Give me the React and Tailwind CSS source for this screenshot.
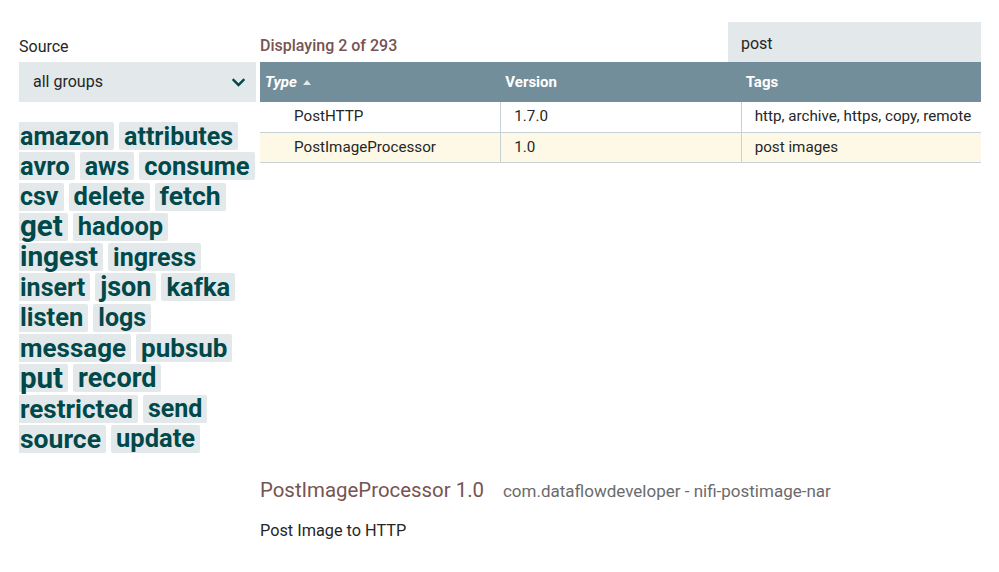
import React from "react";
import { FaChevronDown } from "react-icons/fa";

const tags = [
  ["amazon", "text-[25px]"],
  ["attributes", "text-[25px]"],
  ["avro", "text-[25.5px]"],
  ["aws", "text-[25px]"],
  ["consume", "text-[25.5px]"],
  ["csv", "text-[25px]"],
  ["delete", "text-[25.5px]"],
  ["fetch", "text-[26.5px]"],
  ["get", "text-[29.5px]"],
  ["hadoop", "text-[25.5px]"],
  ["ingest", "text-[28px]"],
  ["ingress", "text-[25px]"],
  ["insert", "text-[25px]"],
  ["json", "text-[27px]"],
  ["kafka", "text-[25.5px]"],
  ["listen", "text-[25.5px]"],
  ["logs", "text-[25px]"],
  ["message", "text-[26px]"],
  ["pubsub", "text-[26px]"],
  ["put", "text-[29.5px]"],
  ["record", "text-[27px]"],
  ["restricted", "text-[26px]"],
  ["send", "text-[25px]"],
  ["source", "text-[26.5px]"],
  ["update", "text-[25.5px]"],
];

const rows = [
  { type: "PostHTTP", version: "1.7.0", tags: "http, archive, https, copy, remote", selected: false },
  { type: "PostImageProcessor", version: "1.0", tags: "post images", selected: true },
];

export default function App() {
  return (
    <div
      className="w-[999px] h-[572px] bg-white flex pl-[19px] pt-[22px] text-[#262626]"
      style={{ fontFamily: "Roboto, 'Noto Sans', sans-serif" }}
    >
      {/* left column */}
      <div className="w-[237px] mr-[4px] shrink-0">
        <div className="h-[40px] flex items-end pb-[3px] text-[16px]">Source</div>
        <div className="h-[40px] bg-[#e3e8eb] flex items-center justify-between pl-[14px] pr-[10px] text-[16px]">
          <span>all groups</span>
          <FaChevronDown className="text-[#004849] w-[15px] h-[15px]" />
        </div>
        <div className="mt-[20px] overflow-hidden">
          <div className="-ml-[4px] flex flex-wrap gap-x-[5px] gap-y-[2.3px]">
            {tags.map(([t, s]) => (
              <span
                key={t}
                className={`h-[28px] flex items-center px-[5px] rounded-[2px] bg-[#e3e8eb] text-[#004849] font-bold leading-none ${s}`}
              >
                {t}
              </span>
            ))}
          </div>
        </div>
      </div>

      {/* right column */}
      <div className="w-[721px] shrink-0">
        <div className="h-[40px] flex justify-between">
          <div className="pt-[12px] text-[16px] font-medium text-[#775351]">Displaying 2 of 293</div>
          <div className="w-[253px] h-[40px] bg-[#e3e8eb] flex items-center pl-[13px] pt-[3px] text-[16px]">post</div>
        </div>

        <div className="grid grid-cols-3 h-[40px] bg-[#728e9b] text-white font-bold text-[15px]">
          <div className="flex items-center pl-[5px] pt-[1px] italic gap-[6px]">
            Type
            <span className="w-0 h-0 border-l-[4px] border-r-[4px] border-b-[5px] border-l-transparent border-r-transparent border-b-[#e3e8eb]" />
          </div>
          <div className="flex items-center pl-[5px] pt-[1px]">Version</div>
          <div className="flex items-center pl-[5px] pt-[1px]">Tags</div>
        </div>

        {rows.map((r) => (
          <div
            key={r.type}
            className={`grid grid-cols-3 h-[30.5px] border-b border-[#c7d2d7] text-[15.2px] ${r.selected ? "bg-[#fdf9e6]" : "bg-white"}`}
          >
            <div className="flex items-center pl-[34px]">{r.type}</div>
            <div className="flex items-center pl-[13px] border-l border-[#c7d2d7]">{r.version}</div>
            <div className="flex items-center pl-[13px] border-l border-[#c7d2d7]">{r.tags}</div>
          </div>
        ))}

        <div className="mt-[312px] flex items-baseline gap-[19px]">
          <span className="text-[20.4px] text-[#775351]">PostImageProcessor 1.0</span>
          <span className="text-[17px] text-[#6b6b6b]">com.dataflowdeveloper - nifi-postimage-nar</span>
        </div>
        <div className="mt-[13px] text-[16.3px]">Post Image to HTTP</div>
      </div>
    </div>
  );
}
